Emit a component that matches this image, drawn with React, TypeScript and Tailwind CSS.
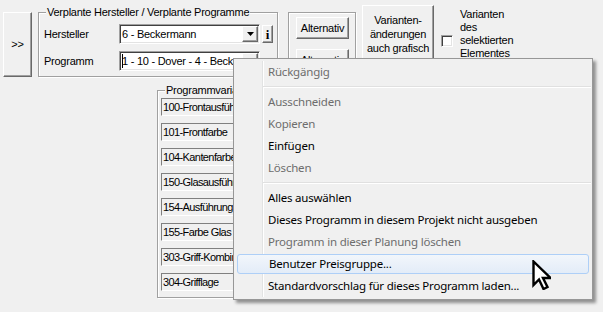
import type { ReactNode } from 'react';

const raised =
  'border border-t-white border-l-white border-r-[#696969] border-b-[#696969] shadow-[inset_-1px_-1px_0_#a0a0a0] bg-[#f0f0f0]';
const sunken =
  'border border-t-[#a0a0a0] border-l-[#a0a0a0] border-r-white border-b-white shadow-[inset_1px_1px_0_#404040,inset_-1px_-1px_0_#e3e3e3]';

const GroupBox = ({
  label,
  className,
  children,
}: {
  label?: string;
  className: string;
  children: ReactNode;
}) => (
  <div className={`relative border border-[#a0a0a0] shadow-[inset_1px_1px_0_#fff,1px_1px_0_#fff] ${className}`}>
    {label && (
      <span className="absolute -top-[8px] left-[7px] bg-[#f0f0f0] px-[1px] leading-[14px] whitespace-nowrap">
        {label}
      </span>
    )}
    {children}
  </div>
);

const Combo = ({ text, caret }: { text: string; caret?: boolean }) => (
  <div className={`flex h-[20px] w-[141px] items-center bg-white pl-[2px] ${sunken}`}>
    <div className="flex flex-1 items-center whitespace-nowrap">
      {caret && <span className="mr-[-1px] h-[14px] w-[1px] bg-black" />}
      {text}
    </div>
    <div className={`mr-[1px] flex h-[16px] w-[16px] items-center justify-center ${raised}`}>
      <svg width="7" height="4" viewBox="0 0 7 4">
        <path d="M0 0h7L3.5 4z" fill="#000" />
      </svg>
    </div>
  </div>
);

const variants = [
  '100-Frontausführung',
  '101-Frontfarbe',
  '104-Kantenfarbe',
  '150-Glasausführung',
  '154-Ausführung Glas',
  '155-Farbe Glas',
  '303-Griff-Kombination',
  '304-Grifflage',
];

type Entry = { label?: string; disabled?: boolean; active?: boolean; sep?: boolean };

const menu: Entry[] = [
  { label: 'Rückgängig', disabled: true },
  { sep: true },
  { label: 'Ausschneiden', disabled: true },
  { label: 'Kopieren', disabled: true },
  { label: 'Einfügen' },
  { label: 'Löschen', disabled: true },
  { sep: true },
  { label: 'Alles auswählen' },
  { label: 'Dieses Programm in diesem Projekt nicht ausgeben' },
  { label: 'Programm in dieser Planung löschen', disabled: true },
  { label: 'Benutzer Preisgruppe...', active: true },
  { label: 'Standardvorschlag für dieses Programm laden...' },
];

export default function App() {
  return (
    <div className="relative h-[312px] w-[603px] overflow-hidden bg-[#f0f0f0] font-['Liberation_Sans',Arial,sans-serif] text-[11px] leading-none tracking-[-0.25px] text-black">
      <div className="flex h-[80px] items-start">
        <div className={`ml-[3px] mt-[12px] flex h-[65px] w-[29px] items-center justify-center ${raised}`}>
          &gt;&gt;
        </div>

        <GroupBox label="Verplante Hersteller / Verplante Programme" className="ml-[6px] mt-[12px] h-[65px] w-[240px]">
          <div className="flex flex-col gap-[7px] pl-[5px] pt-[11px]">
            <div className="flex items-center">
              <span className="w-[75px]">Hersteller</span>
              <Combo text="6 - Beckermann" />
              <div className={`ml-[2px] flex h-[18px] w-[11px] items-center justify-center font-['Liberation_Serif',serif] text-[13px] font-bold ${raised}`}>
                i
              </div>
            </div>
            <div className="flex items-center">
              <span className="w-[75px]">Programm</span>
              <Combo text="1 - 10 - Dover - 4 - Becker" caret />
            </div>
          </div>
        </GroupBox>

        <GroupBox className="ml-[10px] mt-[12px] h-[65px] w-[68px]">
          <div className="flex flex-col gap-[10px] pl-[7px] pt-[4px]">
            <div className={`flex h-[22px] w-[53px] items-center justify-center ${raised}`}>Alternativ</div>
            <div className={`flex h-[22px] w-[53px] items-center justify-center ${raised}`}>Alternativ</div>
          </div>
        </GroupBox>

        <div className={`ml-[6px] mt-[5px] flex h-[70px] w-[72px] flex-col items-center pt-[7px] text-center leading-[14px] ${raised}`}>
          <span>Varianten-</span>
          <span>änderungen</span>
          <span>auch grafisch</span>
          <span>aktualisieren</span>
        </div>

        <div className="ml-[7px] mt-[8px] flex items-start">
          <div className={`mt-[27px] h-[12px] w-[12px] bg-white ${sunken}`} />
          <div className="ml-[7px] flex flex-col leading-[13px]">
            <span>Varianten</span>
            <span>des</span>
            <span>selektierten</span>
            <span>Elementes</span>
          </div>
        </div>
      </div>

      <div className="pl-[157px] pt-[10px]">
        <GroupBox label="Programmvarianten" className="h-[208px] w-[180px]">
          <div className="flex flex-col gap-[7px] pl-[3px] pt-[7px]">
            {variants.map((v) => (
              <div
                key={v}
                className="flex h-[18px] w-[160px] items-center overflow-hidden whitespace-nowrap border border-t-[#808080] border-l-[#808080] border-r-white border-b-white pl-[1px] tracking-[-0.6px]"
              >
                {v}
              </div>
            ))}
          </div>
        </GroupBox>
      </div>

      {/* context menu */}
      <div className="absolute left-[233px] top-[58px] h-[242px] w-[360px] border border-[#979797] bg-[#f0f0f0] py-[2px] font-['Noto_Sans',sans-serif] text-[11.5px] tracking-[-0.2px] shadow-[3px_3px_3px_rgba(0,0,0,0.4)]">
        <div className="absolute bottom-[2px] left-[28px] top-[2px] w-[2px] border-l border-l-[#e2e3e3] border-r border-r-white" />
        {menu.map((m, i) =>
          m.sep ? (
            <div key={i} className="relative flex h-[8px] items-center pl-[29px] pr-[1px]">
              <div className="h-[2px] w-full border-t border-t-[#e0e0e0] border-b border-b-white" />
            </div>
          ) : (
            <div key={i} className="relative flex h-[22px] items-center px-[3px] py-[1px]">
              <div
                className={`flex h-full w-full items-center rounded-[3px] pl-[31px] ${
                  m.active
                    ? 'border border-[#aecff7] bg-gradient-to-b from-[#f2f6fb] to-[#e3ecf8] pl-[30px]'
                    : ''
                } ${m.disabled ? 'text-[#6d6d6d]' : 'text-black'}`}
              >
                {m.label}
              </div>
            </div>
          )
        )}
      </div>

      <svg className="absolute left-[532px] top-[260px]" width="19" height="30" viewBox="0 0 19 30">
        <path
          d="M1.5 1.5V25l5.5-5.5 4.5 9.5 4-2-4.5-9h7.5z"
          fill="#fff"
          stroke="#000"
          strokeWidth="2.4"
          strokeLinejoin="miter"
        />
      </svg>
    </div>
  );
}
